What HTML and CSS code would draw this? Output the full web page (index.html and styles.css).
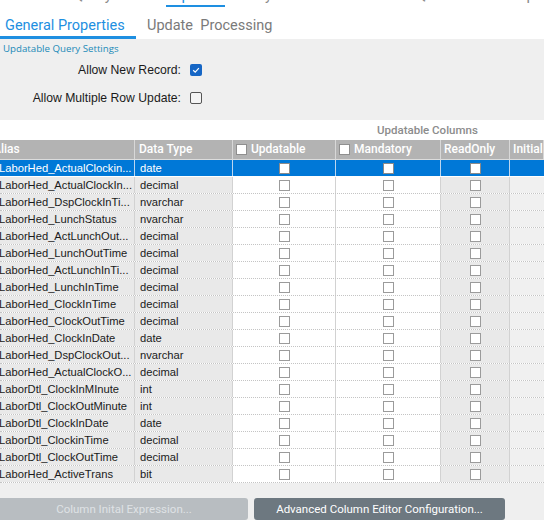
FILE: index.html
```html
<!DOCTYPE html>
<html>
<head>
<meta charset="utf-8">
<link rel="stylesheet" href="styles.css">
</head>
<body>
<div class="page">
  <div class="apptabs">
    <span class="apptab t1">General</span>
    <span class="apptab t2">Query Builder</span>
    <span class="apptab t3 sel">Update</span>
    <span class="apptab t4">Analyze</span>
    <span class="apptab t5">Where Used</span>
    <span class="apptab t6">BAQ Search</span>
    <span class="apptab t7">Company</span>
  </div>
  <div class="subtabs">
    <div class="subtab active">General Properties</div>
    <div class="subtab">Update&nbsp; Processing</div>
  </div>
  <div class="settings">
    <div class="settings-title">Updatable Query Settings</div>
    <div class="setting-row">
      <span class="setting-label">Allow New Record:</span>
      <span class="cb cb-checked"><svg width="12" height="12" viewBox="0 0 12 12"><path d="M3.2 6.2 L5.2 8.1 L8.9 4.2" fill="none" stroke="#fff" stroke-width="1.2"/></svg></span>
    </div>
    <div class="setting-row">
      <span class="setting-label">Allow Multiple Row Update:</span>
      <span class="cb"></span>
    </div>
  </div>
  <div class="grid-area">
    <div class="group-caption"><span>Updatable Columns</span></div>
    <div class="grid">
      <div class="row head">
        <div class="c alias">Alias</div>
        <div class="c dtype">Data Type</div>
        <div class="c hl"><span class="hcb"></span>Updatable</div>
        <div class="c hl"><span class="hcb"></span>Mandatory</div>
        <div class="c hl ro">ReadOnly</div>
        <div class="c hl">Initial</div>
      </div>
      <div id="rows"></div>
    </div>
  </div>
  <div class="footer">
    <button class="btn disabled">Column Inital Expression...</button>
    <button class="btn primary">Advanced Column Editor Configuration...</button>
  </div>
</div>
<script src="app.js"></script>
</body>
</html>
```
FILE: app.js
```js
var data = [
  ["LaborHed_ActualClockin...", "date"],
  ["LaborHed_ActualClockIn...", "decimal"],
  ["LaborHed_DspClockInTi...", "nvarchar"],
  ["LaborHed_LunchStatus", "nvarchar"],
  ["LaborHed_ActLunchOut...", "decimal"],
  ["LaborHed_LunchOutTime", "decimal"],
  ["LaborHed_ActLunchInTi...", "decimal"],
  ["LaborHed_LunchInTime", "decimal"],
  ["LaborHed_ClockInTime", "decimal"],
  ["LaborHed_ClockOutTime", "decimal"],
  ["LaborHed_ClockInDate", "date"],
  ["LaborHed_DspClockOut...", "nvarchar"],
  ["LaborHed_ActualClockO...", "decimal"],
  ["LaborDtl_ClockInMInute", "int"],
  ["LaborDtl_ClockOutMinute", "int"],
  ["LaborDtl_ClockInDate", "date"],
  ["LaborDtl_ClockinTime", "decimal"],
  ["LaborDtl_ClockOutTime", "decimal"],
  ["LaborHed_ActiveTrans", "bit"]
];
var html = "";
data.forEach(function (d, i) {
  html += '<div class="row' + (i === 0 ? ' selected' : '') + '">' +
    '<div class="c alias">' + d[0] + '</div>' +
    '<div class="c dtype">' + d[1] + '</div>' +
    '<div class="c mid"><span class="gcb"></span></div>' +
    '<div class="c mid"><span class="gcb"></span></div>' +
    '<div class="c mid ro"><span class="gcb"></span></div>' +
    '<div class="c init"></div>' +
    '</div>';
});
document.getElementById("rows").innerHTML = html;
```
FILE: styles.css
```css
html, body {
  margin: 0;
  padding: 0;
}
body {
  width: 544px;
  height: 520px;
  overflow: hidden;
  background: #efefef;
  font-family: "Liberation Sans", Arial, sans-serif;
}
.page {
  width: 544px;
  height: 520px;
  display: flex;
  flex-direction: column;
  overflow: hidden;
}
.apptabs {
  height: 8px;
  flex: none;
  background: #fff;
  overflow: hidden;
  display: flex;
  align-items: flex-start;
}
.apptab {
  display: block;
  height: 20px;
  font-family: Roboto, sans-serif;
  font-size: 15px;
  line-height: 20px;
  color: #8a8a8a;
  flex: none;
  text-align: center;
  margin-top: -15px;
  white-space: nowrap;
}
.apptab.t1 { margin-left: 5px; width: 50px; }
.apptab.t2 { margin-left: 18px; width: 82px; }
.apptab.t3 { margin-left: 11px; width: 59px; color: #1e8fe1; border-bottom: 2px solid #1e8fe1; }
.apptab.t4 { margin-left: 10px; width: 50px; }
.apptab.t5 { margin-left: 20px; width: 75px; }
.apptab.t6 { margin-left: 17px; width: 78px; }
.apptab.t7 { margin-left: 20px; width: 70px; text-align: left; }

.subtabs {
  height: 31px;
  flex: none;
  background: #fff;
  display: flex;
  align-items: flex-end;
}
.subtab {
  font-family: Roboto, sans-serif;
  font-size: 14.5px;
  color: #7a7a7a;
  line-height: 20px;
  padding: 0 10px 3px 11px;
  white-space: nowrap;
}
.subtab.active {
  color: #1e8fe1;
  width: 126px;
  padding-left: 5px;
  padding-right: 5px;
  border-bottom: 3px solid #1e8fe1;
  padding-bottom: 0;
}

.settings {
  height: 81px;
  flex: none;
  padding-top: 3px;
  box-sizing: border-box;
  background: #efefef;
}
.settings-title {
  font-family: "Open Sans", sans-serif;
  font-size: 9.7px;
  line-height: 14px;
  color: #1a8ab8;
  padding-left: 3px;
}
.setting-row {
  height: 28px;
  display: grid;
  grid-template-columns: 181px 12px;
  column-gap: 9px;
  align-items: center;
}
.setting-label {
  text-align: right;
  font-family: "Liberation Sans", Arial, sans-serif;
  font-size: 12.2px;
  color: #1a1a1a;
}
.cb {
  width: 10px;
  height: 10px;
  border: 1px solid #555;
  border-radius: 2px;
  background: #f4f4f4;
  display: block;
}
.cb-checked {
  width: 12px;
  height: 12px;
  border: none;
  background: #1666c5;
}
.cb-checked svg { display: block; }

.grid-area {
  background: #fff;
  height: 363px;
  flex: none;
}
.group-caption {
  height: 20px;
  padding-left: 377px;
}
.group-caption span {
  display: block;
  font-family: Roboto, sans-serif;
  font-weight: 500;
  font-size: 11.5px;
  line-height: 20px;
  color: #8c8c8c;
  white-space: nowrap;
}
.row {
  display: grid;
  grid-template-columns: 135px 98px 103px 105px 69px 1fr;
  height: 17px;
  border-bottom: 1px dotted #c4c4c4;
  box-sizing: border-box;
}
.row.head {
  height: 20px;
  background: #b3b3b3;
  border-bottom: 1px solid #dcdcdc;
}
.c {
  border-right: 1px solid #d2d2d2;
  font-size: 11.2px;
  line-height: 16px;
  color: #1a1a1a;
  white-space: nowrap;
  overflow: hidden;
  display: flex;
  align-items: center;
}
.row .c.alias { background: #e9e9e9; padding-left: 0; text-indent: -1px; }
.row .c.dtype { background: #e9e9e9; padding-left: 5px; }
.row .c.mid { justify-content: center; background: #fff; }
.row .c.ro { background: #e9e9e9; }
.row .c.init { background: #f0f0f0; border-right: none; }

.row.head .c {
  background: #b3b3b3;
  color: #fff;
  font-family: Roboto, sans-serif;
  font-weight: 500;
  font-size: 12px;
  border-right: 1px solid #d8d8d8;
  line-height: 19px;
}
.row.head .c.alias { text-indent: -7px; }
.row.head .c.dtype { padding-left: 4px; }
.row.head .c.hl { padding-left: 3px; }
.hcb {
  width: 9px;
  height: 9px;
  border: 1px solid #8f8f8f;
  background: #fff;
  margin-right: 4px;
  flex: none;
}
.gcb {
  width: 9px;
  height: 9px;
  border: 1px solid #9b9b9b;
  background: #fff;
  display: block;
}
.row.selected { border-bottom: 1px dotted #ffffff; }
.row.selected .c {
  background: #0078d7;
  color: #fff;
  border-right-color: #bcd6ef;
}
.row.selected .gcb {
  border-color: #8a8a8a;
}

.footer {
  flex: 1;
  background: #efefef;
  display: flex;
  align-items: flex-start;
  padding-top: 15px;
  gap: 6px;
}
.btn {
  height: 22px;
  border: none;
  border-radius: 3px;
  font-family: Roboto, sans-serif;
  font-size: 11.5px;
  padding: 0;
  margin: 0;
}
.btn.disabled {
  width: 248px;
  background: #b8bdc1;
  color: #dfe2e5;
  border-top-left-radius: 0;
  border-bottom-left-radius: 0;
}
.btn.primary {
  width: 251px;
  background: #6d7880;
  color: #fff;
}
```
